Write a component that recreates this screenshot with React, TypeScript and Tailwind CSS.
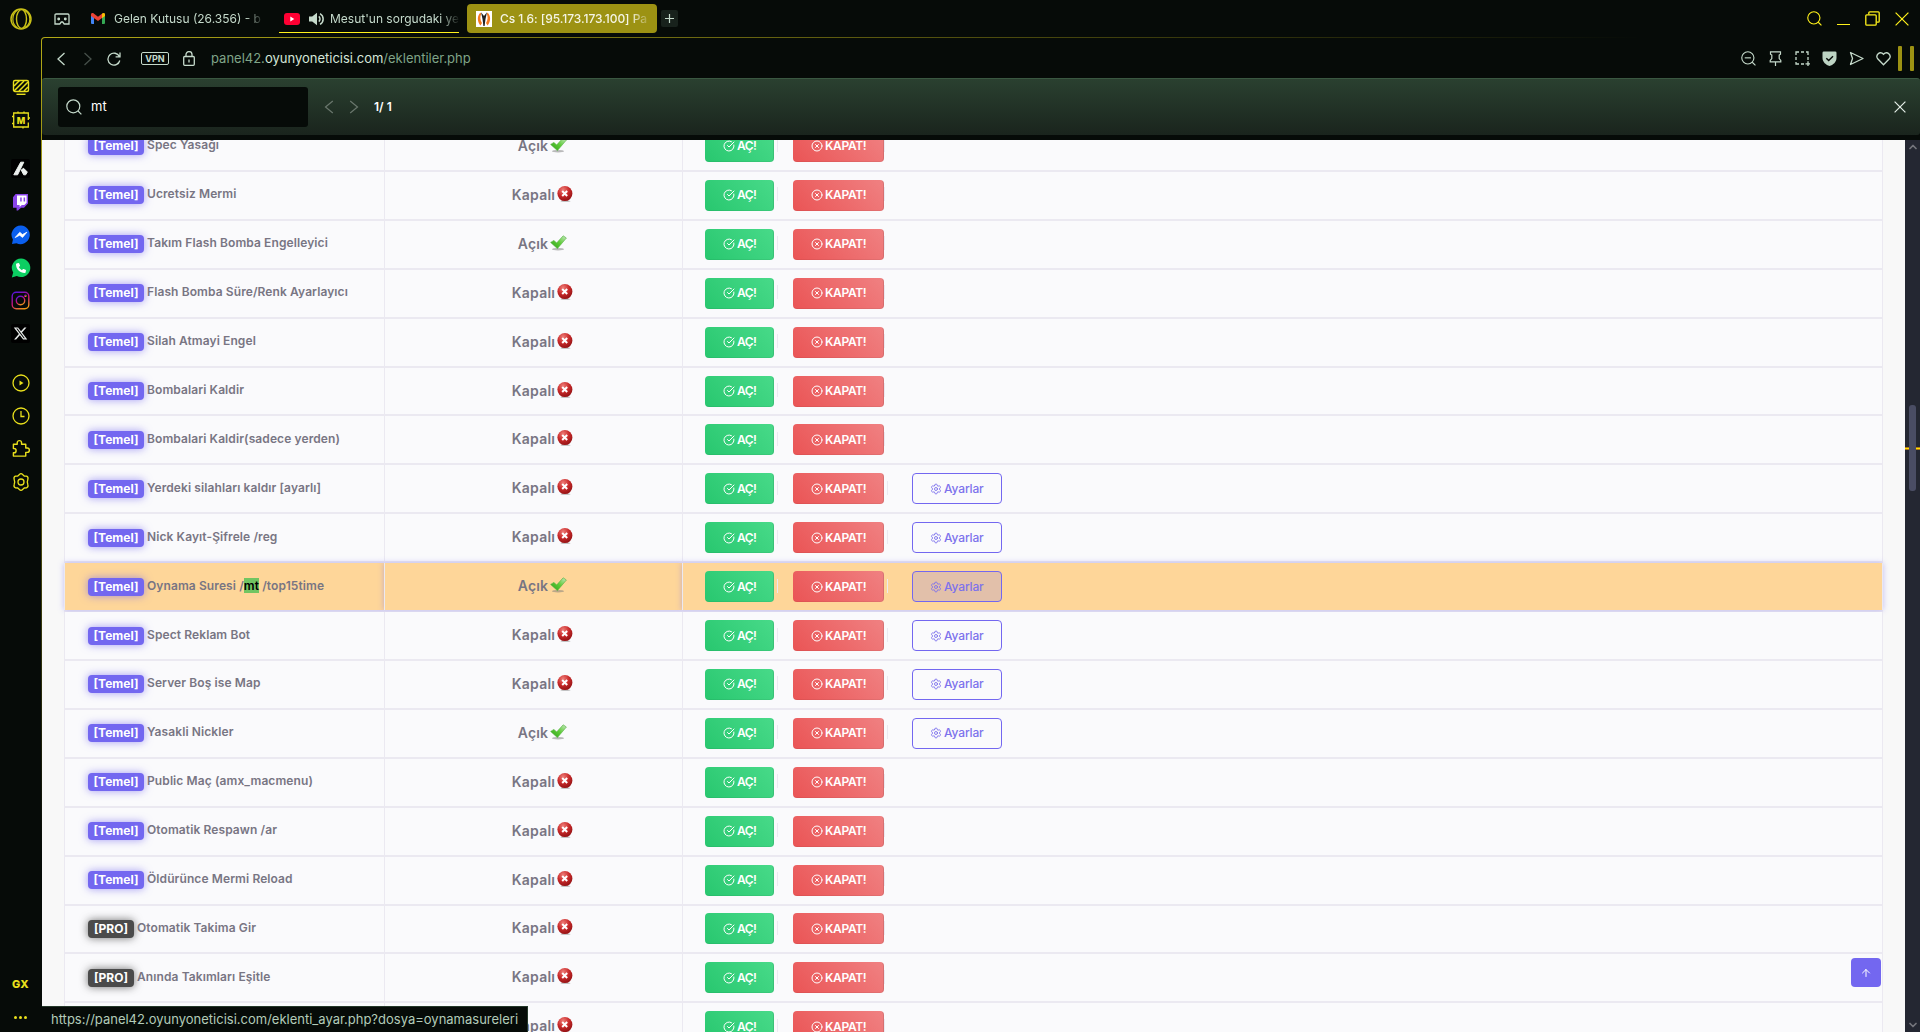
import React from 'react';
import clsx from 'clsx';
import {
  ArrowUp,
  ChevronDown,
  ChevronUp,
  CircleCheckBig,
  CircleX,
  Settings,
} from 'lucide-react';
import { FaXTwitter, FaPhone } from 'react-icons/fa6';

type Plugin = {
  name: React.ReactNode;
  pro?: boolean;
  on?: boolean;
  settings?: boolean;
  active?: boolean;
};

const plugins: Plugin[] = [
  { name: 'Spec Yasağı', on: true },
  { name: 'Ucretsiz Mermi' },
  { name: 'Takım Flash Bomba Engelleyici', on: true },
  { name: 'Flash Bomba Süre/Renk Ayarlayıcı' },
  { name: 'Silah Atmayi Engel' },
  { name: 'Bombalari Kaldir' },
  { name: 'Bombalari Kaldir(sadece yerden)' },
  { name: 'Yerdeki silahları kaldır [ayarlı]', settings: true },
  { name: 'Nick Kayıt-Şifrele /reg', settings: true },
  {
    name: (
      <>
        Oynama Suresi /<mark className="bg-[#71c562] text-black">mt</mark> /top15time
      </>
    ),
    on: true,
    settings: true,
    active: true,
  },
  { name: 'Spect Reklam Bot', settings: true },
  { name: 'Server Boş ise Map', settings: true },
  { name: 'Yasakli Nickler', on: true, settings: true },
  { name: 'Public Maç (amx_macmenu)' },
  { name: 'Otomatik Respawn /ar' },
  { name: 'Öldürünce Mermi Reload' },
  { name: 'Otomatik Takima Gir', pro: true },
  { name: 'Anında Takımları Eşitle', pro: true },
  { name: '', pro: true },
];

function TickIcon() {
  return (
    <svg width="17" height="16" viewBox="0 0 17 16" className="shrink-0">
      <defs>
        <linearGradient id="tick" x1="0" y1="1" x2="1" y2="0">
          <stop offset="0" stopColor="#2f9e1c" />
          <stop offset="0.5" stopColor="#5ccb35" />
          <stop offset="1" stopColor="#c9e8c4" />
        </linearGradient>
      </defs>
      <ellipse cx="8" cy="14.2" rx="6" ry="1.2" fill="#777" opacity="0.5" />
      <path d="M.6 7.4 4 5.4 6.600 8 13.2.8 16.4 3 7.400 13.6z" fill="url(#tick)" stroke="#4fae3a" strokeWidth="0.6" />
    </svg>
  );
}

function CrossIcon() {
  return (
    <svg width="16" height="16" viewBox="0 0 16 16" className="shrink-0">
      <defs>
        <radialGradient id="ball" cx="0.38" cy="0.25" r="0.8">
          <stop offset="0" stopColor="#ee7d78" />
          <stop offset="0.5" stopColor="#c92a2a" />
          <stop offset="1" stopColor="#8e0f12" />
        </radialGradient>
      </defs>
      <ellipse cx="8.5" cy="15.2" rx="5" ry="0.7" fill="#888" opacity="0.5" />
      <circle cx="7.9" cy="7.6" r="7.5" fill="url(#ball)" />
      <path d="m5.2 5 5 5m0-5-5 5" stroke="#fff" strokeWidth="2" />
    </svg>
  );
}

function PluginRow({ name, pro, on, settings, active }: Plugin) {
  const cell = clsx(
    'flex items-center border-l border-[#ebe9f1]',
    active ? 'bg-[#fed699] shadow-[0_0_6px_rgba(115,103,240,0.4)]' : 'bg-[#fafafc]'
  );
  return (
    <div className="flex h-[48.91px] shrink-0 border-b-2 border-[#ebe9f1] bg-[#fafafc]">
      <div className={clsx(cell, 'w-[320px] pl-[23px]')}>
        {name && (
          <span
            className={clsx(
              'flex h-[18px] items-center justify-center rounded-[4px] text-[12px] font-bold leading-none text-white',
              pro
                ? 'w-[46px] bg-[#4b4b4b] shadow-[0_0_8px_rgba(40,40,40,0.65)]'
                : 'w-[56px] bg-[#7367f0] shadow-[0_0_8px_rgba(115,103,240,0.65)]'
            )}
          >
            {pro ? '[PRO]' : '[Temel]'}
          </span>
        )}
        <span className="relative -top-px ml-[3px] whitespace-pre text-[12px] font-semibold leading-[14px] tracking-[0.1px] text-[#787583]">
          {name}
        </span>
      </div>
      <div className={clsx(cell, 'w-[298px] justify-center pb-[3px] pl-[18px]')}>
        <span className="mr-[2px] mt-[2px] text-[14px] font-semibold leading-none tracking-[0.2px] text-[#787583]">
          {on ? 'Açık' : 'Kapalı'}
        </span>
        {on ? <TickIcon /> : <CrossIcon />}
      </div>
      <div className={clsx(cell, 'w-[1201px] border-r pl-[22px]')}>
        <button className="flex h-[31px] w-[69px] items-center rounded-[4px] border border-t-transparent border-l-transparent border-r-black/10 border-b-black/5 bg-[linear-gradient(47deg,#28c76f,#48da89)] bg-origin-border pl-[17px] text-[12px] font-semibold tracking-[-0.5px] text-white">
          <CircleCheckBig size={12} strokeWidth={2} className="mr-[2px]" />
          AÇ!
        </button>
        <i className="relative -top-px ml-[3px] mr-[15px] h-[14px] w-px bg-[#ebe9f1]" />
        <button className="flex h-[31px] w-[91px] items-center rounded-[4px] border border-t-transparent border-l-transparent border-r-black/10 border-b-black/5 bg-[linear-gradient(47deg,#ea5455,#f08182)] bg-origin-border pl-[17px] text-[12px] font-semibold tracking-[-0.35px] text-white">
          <CircleX size={12} strokeWidth={2} className="mr-[2px]" />
          KAPAT!
        </button>
        <i className={clsx('relative -top-px h-[14px] w-px bg-[#ebe9f1]', settings && 'ml-[3px]')} />
        {settings && (
          <button
            className={clsx(
              'ml-[24px] flex h-[31px] w-[90px] items-center rounded-[4px] border border-[#7367f0] pl-[17px] text-[12px] font-medium tracking-[-0.15px] text-[#7d72ec]',
              active && 'bg-[#7367f0]/20'
            )}
          >
            <Settings size={12} strokeWidth={1.8} className="mr-[2px]" />
            Ayarlar
          </button>
        )}
      </div>
    </div>
  );
}

function Slot({ children, className }: { children: React.ReactNode; className?: string }) {
  return <div className={clsx('flex h-[33px] items-center justify-center', className)}>{children}</div>;
}

function Sidebar() {
  return (
    <aside className="flex w-[41px] shrink-0 flex-col items-center text-[#e9e01c]">
      <svg width="22" height="22" viewBox="0 0 22 22" className="mt-[8px]" fill="none" stroke="#c9c117">
        <circle cx="11" cy="11" r="10" strokeWidth="1.5" />
        <ellipse cx="11.5" cy="11" rx="5" ry="9.4" strokeWidth="1.4" />
        <path d="M7.5 2a11 11 0 0 0 0 18M14.5 2.4a9.6 9.6 0 0 1 0 17.2" strokeWidth="1.2" />
      </svg>
      <nav className="mt-[40px] flex flex-col items-center">
        <Slot>
          <svg width="18" height="18" viewBox="0 0 18 18" fill="none" stroke="currentColor" strokeWidth="1.4">
            <rect x="1.5" y="2.5" width="15" height="11" rx="1.5" />
            <path d="m2 8 5.500-5.500M2 13 12 3M7 13l9-9M12 13l4-4" strokeWidth="1.5" />
            <path d="M4.5 16.3h9" strokeWidth="1.4" />
          </svg>
        </Slot>
        <Slot>
          <svg width="18" height="18" viewBox="0 0 18 18" fill="none" stroke="currentColor" strokeWidth="1.3">
            <path d="M16.3 11.500V16H1.700V2h14.600v7M1.700 5.500H0M1.700 12.500H0M6 .5V2M11 16v1.500M16 7h2M12 .5V2" />
            <text x="9" y="12.500" textAnchor="middle" fontFamily="Inter" fontSize="9" fontWeight="800" fill="currentColor" stroke="none">
              M
            </text>
          </svg>
        </Slot>
        <Slot className="mt-[16px]">
          <svg width="19" height="19" viewBox="0 0 19 19">
            <rect width="19" height="19" rx="2" fill="#000" />
            <path d="M9.7 3.2h3.1L6.6 15.8H2.8zM10.2 11l2.4-1.7 3.7 3.7-1.6 2.8h-2z" fill="#ecf0ee" stroke="#ecf0ee" strokeLinejoin="round" />
          </svg>
        </Slot>
        <Slot>
          <svg width="17" height="18" viewBox="0 0 17 18">
            <path d="M3.6 1H16v9.6l-4 4.2H9L6 17.6H4.6v-2.8H1V4.2z" fill="#8a44ea" />
            <path d="M5 2.4h9.6v7.4l-2.3 2.3H9.8l-2.2 2v-2H5z" fill="#fff" />
            <path d="M8.2 4.6h1.5v4H8.2zM11.6 4.6h1.5v4h-1.5z" fill="#8a44ea" />
          </svg>
        </Slot>
        <Slot>
          <svg width="20" height="20" viewBox="0 0 20 20">
            <path d="M10 .5a9.3 9.3 0 1 1-4.5 17.7L1 19l.9-4.4A9.3 9.3 0 0 1 10 .5z" fill="#0a5fee" />
            <path d="m4.2 12.5 4.6-5.2 2.6 2.3 4.5-2.4-4.4 5.2-2.8-2.2z" fill="#fff" stroke="#fff" strokeWidth="0.8" strokeLinejoin="round" />
          </svg>
        </Slot>
        <Slot>
          <span className="relative">
            <svg width="20" height="20" viewBox="0 0 20 20">
              <path d="M10.2.5a9.3 9.3 0 1 1-4.4 17.6L.8 19.4l1.4-4.8A9.3 9.3 0 0 1 10.2.5z" fill="#0ccf62" />
            </svg>
            <FaPhone size={10} className="absolute left-[5px] top-[5px] text-white" />
          </span>
        </Slot>
        <Slot>
          <svg width="19" height="19" viewBox="0 0 19 19" fill="none" stroke="url(#insta)" strokeWidth="1.4">
            <defs>
              <linearGradient id="insta" x1="0.25" y1="0" x2="0.75" y2="1">
                <stop offset="0" stopColor="#5b14d8" />
                <stop offset="0.5" stopColor="#c8127c" />
                <stop offset="1" stopColor="#ef9c14" />
              </linearGradient>
            </defs>
            <rect x="1.2" y="1.2" width="16.6" height="16.6" rx="4" />
            <circle cx="9.5" cy="9.5" r="4.2" />
            <circle cx="14.4" cy="4.7" r="0.6" />
          </svg>
        </Slot>
        <Slot>
          <span className="flex size-[19px] items-center justify-center rounded-[2px] bg-black text-[#e6eae8]">
            <FaXTwitter size={15} />
          </span>
        </Slot>
        <Slot className="mt-[16px]">
          <svg width="18" height="18" viewBox="0 0 18 18" fill="none" stroke="currentColor" strokeWidth="1.3">
            <circle cx="9" cy="9" r="8" />
            <path d="M7.5 6.5v5L11.5 9z" fill="currentColor" stroke="none" />
          </svg>
        </Slot>
        <Slot>
          <svg width="18" height="18" viewBox="0 0 18 18" fill="none" stroke="currentColor" strokeWidth="1.3">
            <circle cx="9" cy="9" r="8" />
            <path d="M9 4v5.5h3.5" />
          </svg>
        </Slot>
        <Slot>
          <svg width="20" height="19" viewBox="2 2 20 20" fill="none" stroke="currentColor" strokeWidth="1.5" strokeLinejoin="round">
            <path d="M4 7.5h4V6a2.3 2.3 0 0 1 4.6 0v1.5H17v4h1.5a2.3 2.3 0 0 1 0 4.6H17V20H4v-3.5h.6a2 2 0 0 0 0-4.5H4z" />
          </svg>
        </Slot>
        <Slot>
          <svg width="18" height="18" viewBox="0 0 18 18" fill="none" stroke="currentColor" strokeWidth="1.3" strokeLinejoin="round">
            <path d="M7.4 1.500Q9-.2 10.600 1.500L12.200 3l2.300.2q2 .8 1.400 2.900L15.300 9l.6 2.900q.6 2.100-1.400 2.900l-2.300.2-1.600 1.500Q9 18.200 7.400 16.500L5.800 15l-2.300-.2q-2-.8-1.400-2.900L2.700 9l-.6-2.900Q1.500 4 3.500 3.200L5.800 3z" />
            <circle cx="9" cy="9" r="3" />
          </svg>
        </Slot>
      </nav>
      <span className="mt-auto font-['Inter'] text-[11px] font-extrabold leading-none tracking-[0.3px]">GX</span>
      <span className="mb-[13px] mt-[26px] flex gap-[2px]">
        <i className="size-[3px] rounded-full bg-current" />
        <i className="size-[3px] rounded-full bg-current" />
        <i className="size-[3px] rounded-full bg-current" />
      </span>
    </aside>
  );
}

function SearchGlyph({ size, minus }: { size: number; minus?: boolean }) {
  return (
    <svg width={size} height={size} viewBox="0 0 16 16" fill="none" stroke="currentColor" strokeWidth="1.2">
      <circle cx="7.3" cy="7.3" r="6.5" />
      <path d="m12 12 3.400 3.400" />
      {minus && <path d="M4 7.3h6.6" />}
    </svg>
  );
}

function TabBar() {
  return (
    <header className="flex h-[37px] shrink-0 items-start text-[12px] text-[#c5dacb]">
      <svg width="16" height="13" viewBox="0 0 16 13" className="ml-[13px] mt-[13px]" fill="none" stroke="currentColor" strokeWidth="1.3">
        <path d="M1 2.2Q1 1 2.2 1h11.6Q15 1 15 2.2V11H10.2L8.7 9H7.3L5.8 11H1z" />
        <circle cx="4.7" cy="6" r="0.8" fill="currentColor" />
        <circle cx="11.3" cy="6" r="0.8" fill="currentColor" />
      </svg>
      <div className="ml-[21px] flex h-[37px] w-[188px] items-center">
        <svg width="14" height="11" viewBox="0 0 14 11">
          <path d="M0 1.5h3V11H1a1 1 0 0 1-1-1z" fill="#4285f4" />
          <path d="M11 1.5h3V10a1 1 0 0 1-1 1h-2z" fill="#34a853" />
          <path d="M0 1.5C0 0 1.7-.4 2.7.4L7 3.7 11.3.4 11 5 7 8 0 3z" fill="#ea4335" />
          <path d="M11 .6C12.3-.4 14 0 14 1.5V3l-3 2.2z" fill="#fbbc04" />
        </svg>
        <span className="ml-[9px] whitespace-nowrap [mask-image:linear-gradient(90deg,#000_132px,transparent_150px)]">
          Gelen Kutusu (26.356) - b
        </span>
      </div>
      <div className="flex h-[33px] w-[180px] items-center border-b border-[#fff21a] pl-[5px] pt-[5px]">
        <svg width="16" height="12" viewBox="0 0 16 12" className="shrink-0">
          <rect width="16" height="12" rx="3" fill="#ff0033" />
          <path d="M6.3 3.5v5l4-2.5z" fill="#fff" />
        </svg>
        <svg width="16" height="14" viewBox="0 0 16 14" className="ml-[9px] shrink-0" fill="currentColor">
          <path d="M0 4.5h3.2L8 .8v12.4L3.2 9.5H0z" />
          <path d="M9.8 4.4a3.4 3.4 0 0 1 0 5.2M11 1.6a6.2 6.2 0 0 1 0 10.8" fill="none" stroke="currentColor" strokeWidth="1.5" />
        </svg>
        <span className="ml-[5px] whitespace-nowrap [mask-image:linear-gradient(90deg,#000_110px,transparent_130px)]">
          Mesut'un sorgudaki ye
        </span>
      </div>
      <div className="ml-[8px] mt-[4px] flex h-[29px] w-[190px] items-center rounded-[4px] bg-[#9c9213] pl-[9px] font-medium text-[#f4f4e4]">
        <svg width="16" height="16" viewBox="0 0 16 16" className="shrink-0">
          <rect width="16" height="16" fill="#fff" />
          <path d="M4.4 1.5C1 5 1 10.5 4.5 14.5L6 12C4 9 4 5.5 5.2 3zM11.6 1.5C15 5 15 10.5 11.5 14.5L10 12c2-3 2-6.5.8-9z" fill="#f47a20" />
          <path d="M5 1.2 8 5l3-3.8L9.5 8l-.9 7H7.4l-.9-7z" fill="#222" />
        </svg>
        <span className="ml-[8px] whitespace-nowrap tracking-[-0.05px] [mask-image:linear-gradient(90deg,#000_130px,transparent_152px)]">
          Cs 1.6: [95.173.173.100] Pa
        </span>
      </div>
      <button className="ml-[4px] mt-[10px] flex h-[17px] w-[17px] items-center justify-center rounded-[2px] bg-[#18221c]">
        <svg width="9" height="9" viewBox="0 0 9 9" stroke="currentColor" strokeWidth="1.2">
          <path d="M4.5 0v9M0 4.5h9" />
        </svg>
      </button>
      <div className="ml-auto mr-[11px] flex h-[37px] items-center gap-[15px] text-[#fff21a]">
        <SearchGlyph size={15} />
        <i className="mt-[12px] h-px w-[13px] bg-current" />
        <svg width="15" height="15" viewBox="0 0 15 15" fill="none" stroke="currentColor" strokeWidth="1.3">
          <rect x="0.8" y="3.8" width="10.4" height="10.4" rx="1" />
          <path d="M3.8 3.5V1.8q0-1 1-1h8.400q1 0 1 1v8.400q0 1-1 1h-1.700" />
        </svg>
        <svg width="14" height="14" viewBox="0 0 14 14" stroke="currentColor" strokeWidth="1.2">
          <path d="m.6.6 12.8 12.8M13.4.6.6 13.4" />
        </svg>
      </div>
    </header>
  );
}

function AddressBar() {
  return (
    <div className="flex h-[40px] shrink-0 items-center pt-px text-[#c5dacb]">
      <svg width="10" height="14" viewBox="0 0 10 14" className="ml-[14px]" fill="none" stroke="currentColor" strokeWidth="1.3">
        <path d="M8.5 1 2 7l6.500 6" />
      </svg>
      <svg width="10" height="14" viewBox="0 0 10 14" className="ml-[17px]" fill="none" stroke="#46504a" strokeWidth="1.3">
        <path d="M1.5 1 8 7l-6.500 6" />
      </svg>
      <svg width="14" height="14" viewBox="0 0 14 14" className="ml-[14px]" fill="none" stroke="currentColor" strokeWidth="1.3">
        <path d="M12.4 4.600A6 6 0 1 0 12.800 8.500M13 .5v4.400H8.600" />
      </svg>
      <span className="ml-[20px] flex h-[13px] w-[28px] items-center justify-center rounded-[2px] border border-current text-[9px] font-bold leading-none">
        VPN
      </span>
      <svg width="12" height="15" viewBox="0 0 12 15" className="ml-[14px]" fill="none" stroke="currentColor" strokeWidth="1.3">
        <rect x="0.7" y="5.5" width="10.6" height="8.8" rx="1" />
        <path d="M3 5.5V3.6a3 3 0 0 1 6 0v1.900M6 8.5v3" />
      </svg>
      <span className="ml-[16px] text-[13px] text-[#7fa487]">
        panel42.<span className="text-[#d5e6d9]">oyunyoneticisi.com</span>/eklentiler.php
      </span>
      <div className="ml-auto mr-[6px] flex items-center">
        <div className="mr-[7px] flex items-center gap-[12px]">
          <SearchGlyph size={15} minus />
          <svg width="15" height="15" viewBox="0 0 15 15" fill="none" stroke="currentColor" strokeWidth="1.2">
            <path d="M2.5.8h10v2.4L11.200 4v3.500l1.600 2v1.300H2.200V9.500l1.600-2V4L2.500 3.200zM7.500 11v4" />
          </svg>
          <svg width="15" height="15" viewBox="0 0 15 15" fill="none" stroke="currentColor" strokeWidth="1.3">
            <path d="M1 4V1h3M6 1h3M11 1h2v3M1 6v3M1 11v2h3M6 13h3M13 6v3M10.5 12.8H15.500M13 10.3v5" />
          </svg>
          <svg width="15" height="15" viewBox="0 0 15 15">
            <path d="M1.8.5h11.4Q14.5.5 14.5 1.8V7c0 4-3.500 7-7 8C4 14 .5 11 .5 7V1.800Q.5.5 1.8.5z" fill="#bdd4c3" />
            <path d="m4.3 7.2 2.4 2.4 4.300-4.300" fill="none" stroke="#060b08" strokeWidth="1.4" />
          </svg>
          <svg width="15" height="15" viewBox="0 0 15 15" fill="none" stroke="currentColor" strokeWidth="1.3" strokeLinejoin="round">
            <path d="M1.5 1.5 14 7.5l-12.500 6L3.500 7.5z" />
          </svg>
          <svg width="15" height="15" viewBox="0 0 15 15" fill="none" stroke="currentColor" strokeWidth="1.3">
            <path d="M7.5 13.8 1.7 7.8C-.8 4.6 3.600-1 7.500 3.300 11.400-1 15.800 4.600 13.300 7.800z" />
          </svg>
        </div>
        <i className="h-[25px] w-[4px] rounded-[1px] bg-[#9c9213]" />
        <i className="ml-[8px] h-[25px] w-[4px] rounded-[1px] bg-[#9c9213]" />
      </div>
    </div>
  );
}

function FindBar() {
  return (
    <div className="mb-[5px] flex h-[57px] shrink-0 items-center rounded-[3px] border-t border-[#3a5841] bg-[linear-gradient(180deg,#2a4030,#1a241d)] text-[12px]">
      <div className="ml-[16px] flex h-[40px] w-[250px] items-center rounded-[3px] bg-[#060b08] pl-[8px] text-[#c5dacb]">
        <SearchGlyph size={16} />
        <span className="ml-[9px] text-[13px] text-white">mt</span>
      </div>
      <svg width="10" height="14" viewBox="0 0 10 14" className="ml-[16px]" fill="none" stroke="#6a776d" strokeWidth="1.2">
        <path d="M8.8 1 1.5 7l7.300 6" />
      </svg>
      <svg width="10" height="14" viewBox="0 0 10 14" className="ml-[15px]" fill="none" stroke="#6a776d" strokeWidth="1.2">
        <path d="M1.2 1 8.5 7l-7.300 6" />
      </svg>
      <span className="ml-[15px] font-semibold text-white">1/ 1</span>
      <svg width="12" height="12" viewBox="0 0 12 12" className="ml-auto mr-[14px]" stroke="#e4eee7" strokeWidth="1.2">
        <path d="m.6.6 10.8 10.8M11.4.6.6 11.4" />
      </svg>
    </div>
  );
}

function Scrollbar() {
  return (
    <div className="relative flex w-[15px] shrink-0 flex-col items-center justify-between bg-[#242732] py-[1px] text-[#74757c]">
      <ChevronUp size={12} strokeWidth={3.5} />
      <i className="absolute left-0 top-[307px] h-[3px] w-full border-y border-[#b77812] bg-[#ffe600]" />
      <i className="absolute left-[4px] top-[265px] h-[86px] w-[7px] rounded-[3px] bg-[#4a4d64]" />
      <ChevronDown size={12} strokeWidth={3.5} />
    </div>
  );
}

export default function App() {
  return (
    <div className="flex h-[1032px] w-[1920px] overflow-hidden bg-[#060b08] font-['Inter',sans-serif]">
      <Sidebar />
      <div className="flex min-w-0 flex-1 flex-col">
        <TabBar />
        <div className="flex min-h-0 flex-1 flex-col rounded-tl-[4px] bg-[radial-gradient(1600px_820px_at_0_0,#b3aa16,#060b08)] pl-px pt-px">
          <div className="relative flex min-h-0 flex-1 flex-col rounded-tl-[3px] bg-[#060b08]">
            <AddressBar />
            <FindBar />
            <main className="flex min-h-0 flex-1 overflow-hidden bg-[#f8f8f8]">
              <div className="-mt-[16.98px] ml-[22px] flex w-[1819px] flex-col">
                {plugins.map((plugin, i) => (
                  <PluginRow key={i} {...plugin} />
                ))}
              </div>
              <div className="ml-auto flex">
                <Scrollbar />
              </div>
            </main>
            <button className="absolute bottom-[45px] right-[39px] flex h-[29px] w-[30px] items-center justify-center rounded-[4px] bg-[#7367f0] text-white">
              <ArrowUp size={12} strokeWidth={2} />
            </button>
            <div className="absolute bottom-0 left-0 flex h-[26px] w-[486px] items-center border border-b-0 border-l-0 border-[#24382a] bg-[#060b08] pl-[9px] text-[13px] text-[#b3cbb9]">
              https://panel42.oyunyoneticisi.com/eklenti_ayar.php?dosya=oynamasureleri
            </div>
          </div>
        </div>
      </div>
    </div>
  );
}
